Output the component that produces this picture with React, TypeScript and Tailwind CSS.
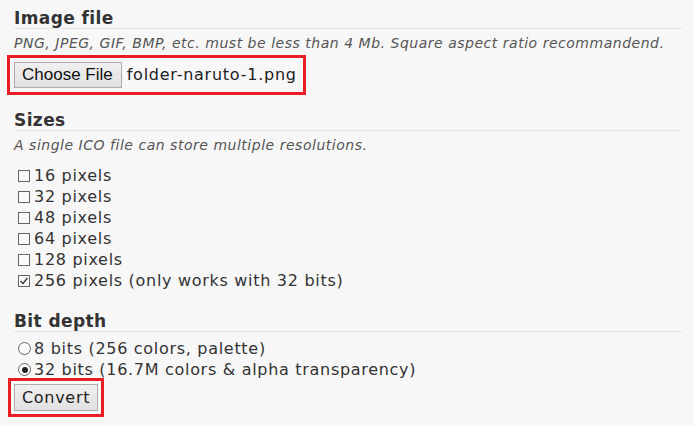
import React from "react";

function Heading({ children }: { children: React.ReactNode }) {
  return (
    <div className="border-b border-[#e4e4e4] text-[17px] font-bold leading-[20px] tracking-[0.4px] text-[#333]">
      {children}
    </div>
  );
}

function Desc({ children }: { children: React.ReactNode }) {
  return (
    <div className="mt-[4px] text-[14px] italic leading-[20px] tracking-[0.52px] text-[#555]">{children}</div>
  );
}

function Box({ checked }: { checked?: boolean }) {
  return (
    <span className="mr-[4px] inline-flex h-[12px] w-[12px] shrink-0 items-center justify-center border border-[#666] bg-[#fafafa]">
      {checked && (
        <svg width="10" height="10" viewBox="0 0 10 10">
          <path d="M1.5 5 L4 7.5 L8.5 2" fill="none" stroke="#333" strokeWidth="1.3" />
        </svg>
      )}
    </span>
  );
}

function Radio({ checked }: { checked?: boolean }) {
  return (
    <span className="mr-[3px] inline-flex h-[13px] w-[13px] shrink-0 items-center justify-center rounded-full border border-[#666] bg-[#fafafa]">
      {checked && <span className="h-[6px] w-[6px] rounded-full bg-[#222]" />}
    </span>
  );
}

export default function App() {
  const sizes = [
    { label: "16 pixels", checked: false },
    { label: "32 pixels", checked: false },
    { label: "48 pixels", checked: false },
    { label: "64 pixels", checked: false },
    { label: "128 pixels", checked: false },
    { label: "256 pixels (only works with 32 bits)", checked: true },
  ];
  return (
    <div className="min-h-[426px] w-full bg-[#f7f7f7] pl-[14px] pr-[12px] pt-[8px] font-['DejaVu_Sans',Verdana,sans-serif] text-[#333]">
      <Heading>Image file</Heading>
      <Desc>PNG, JPEG, GIF, BMP, etc. must be less than 4 Mb. Square aspect ratio recommandend.</Desc>
      <div className="-ml-[7px] mt-[2px] flex w-fit items-center border-[3px] border-[#ea1c24] p-[4px] pr-[6px]">
        <span className="flex h-[26px] items-center border border-[#adadad] bg-gradient-to-b from-[#f0f0f0] to-[#e1e1e1] pl-[7px] pr-[8px] font-['Liberation_Sans',Arial,sans-serif] text-[17px] text-[#111]">
          Choose File
        </span>
        <span className="ml-[5px] text-[16px] tracking-[0.75px] text-[#222]">folder-naruto-1.png</span>
      </div>

      <div className="mt-[15px]">
        <Heading>Sizes</Heading>
        <Desc>A single ICO file can store multiple resolutions.</Desc>
        <div className="mt-[10px] pl-[4px]">
          {sizes.map((s) => (
            <div key={s.label} className="flex h-[21px] items-center text-[16px] leading-[21px] tracking-[0.7px] text-[#333]">
              <Box checked={s.checked} />
              {s.label}
            </div>
          ))}
        </div>
      </div>

      <div className="mt-[20px]">
        <Heading>Bit depth</Heading>
        <div className="mt-[6px] pl-[4px]">
          <div className="flex h-[21px] items-center text-[16px] leading-[21px] tracking-[0.7px]">
            <Radio />8 bits (256 colors, palette)
          </div>
          <div className="flex h-[21px] items-center text-[16px] leading-[21px] tracking-[0.7px]">
            <Radio checked />32 bits (16.7M colors &amp; alpha transparency)
          </div>
        </div>
        <div className="-ml-[6px] -mt-[2px] flex w-fit border-[3px] border-[#ea1c24] p-[3px]">
          <span className="flex h-[27px] items-center border border-[#adadad] bg-gradient-to-b from-[#f0f0f0] to-[#e1e1e1] px-[7px] text-[16px] tracking-[0.7px] text-[#222]">
            Convert
          </span>
        </div>
      </div>
    </div>
  );
}
